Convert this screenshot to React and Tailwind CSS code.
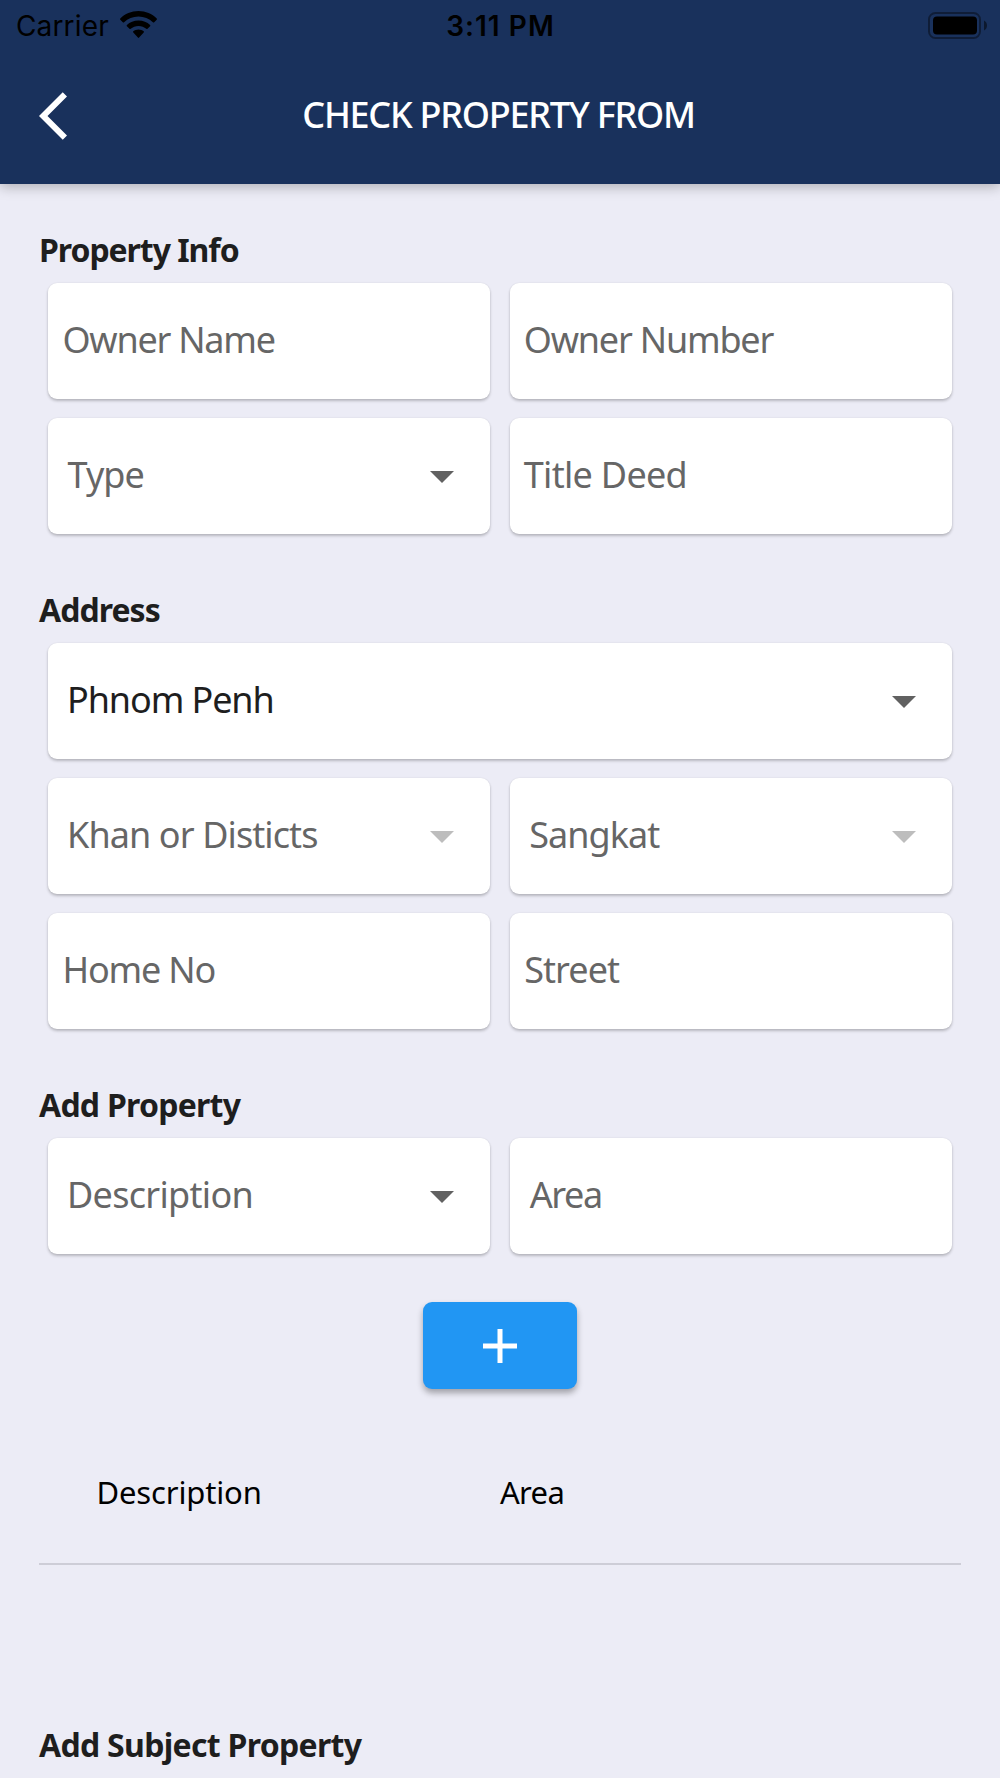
import clsx from "clsx"

const propertyFields = [
  { label: "Owner Name", text: "pl-[14.5px] tracking-[-1.25px]" },
  { label: "Owner Number", text: "pl-[14px] tracking-[-1.2px]" },
  { label: "Type", text: "pl-[19.5px] tracking-[-0.9px]", select: true },
  { label: "Title Deed", text: "pl-[14px] tracking-[-0.7px]" },
]

const addressFields = [
  { label: "Phnom Penh", text: "pl-[19px] tracking-[-1.1px]", select: true, filled: true, wide: true },
  { label: "Khan or Disticts", text: "pl-[19px] tracking-[-0.9px]", select: true, disabled: true },
  { label: "Sangkat", text: "pl-[19.5px] tracking-[-0.95px]", select: true, disabled: true },
  { label: "Home No", text: "pl-[14.5px] tracking-[-1.2px]" },
  { label: "Street", text: "pl-[14.5px] tracking-[-0.95px]" },
]

const addFields = [
  { label: "Description", text: "pl-[19px] tracking-[-0.7px]", select: true },
  { label: "Area", text: "pl-[20px] tracking-[-1.4px]" },
]

const StatusBar = () => {
  return (
    <div className="grid h-[51px] grid-cols-3 items-center text-black font-['Inter',sans-serif]">
      <div className="flex items-center gap-[11px] pl-[16px]">
        <span className="text-[28px] leading-[34px] tracking-[0.15px]">Carrier</span>
        <svg className="-mt-[3px] h-[27px] w-[37px]" viewBox="0 0 37 27">
          <path d="M18.5 0C11.3 0 4.9 2.9.3 7.4c-.4.4-.4.9 0 1.3l2.5 2.6c.4.4.9.4 1.3 0C7.9 7.700 12.900 5.600 18.500 5.600s10.600 2.100 14.400 5.700c.4.4.9.4 1.300 0l2.500-2.600c.4-.4.4-.9 0-1.300C32.100 2.900 25.700 0 18.500 0z" />
          <path d="M18.5 9.400c-4.600 0-8.600 1.700-11.600 4.500-.4.4-.4.9 0 1.300l2.600 2.600c.3.3.8.3 1.200 0 2.100-1.800 4.800-2.900 7.800-2.900s5.700 1.100 7.800 2.900c.4.3.9.3 1.200 0l2.600-2.600c.4-.4.4-.9 0-1.300-3-2.800-7-4.500-11.600-4.500z" />
          <path d="M18.5 18.400c-2 0-3.800.7-5.200 1.800-.4.3-.4.9 0 1.200l4.600 5.200c.3.4.9.4 1.200 0l4.600-5.200c.4-.3.4-.9 0-1.200-1.400-1.100-3.200-1.800-5.200-1.800z" />
        </svg>
      </div>
      <div className="pt-px pl-px text-center text-[28px] leading-[34px] font-semibold tracking-[1.05px]">3:11 PM</div>
      <svg className="mr-[12px] -mt-[1px] h-[27px] w-[60px] justify-self-end" viewBox="0 0 60 27">
        <rect x="1" y="1" width="51" height="25" rx="6.5" fill="none" stroke="#000" strokeOpacity=".4" strokeWidth="2" />
        <rect x="5" y="4.5" width="44" height="18" rx="4" />
        <path d="M56 8.500c2 1 3 2.800 3 5s-1 4-3 5z" fillOpacity=".5" />
      </svg>
    </div>
  )
}

const Header = () => {
  return (
    <header className="relative h-[183.5px] bg-[#19315c] shadow-[0_3px_12px_rgba(0,0,0,0.26)]">
      <StatusBar />
      <div className="grid h-[132px] grid-cols-[120px_1fr_120px] items-start">
        <svg className="mt-[41px] ml-[39px] h-[48px] w-[28px]" viewBox="0 2.1 11.67 19.8">
          <path d="M11.67 3.87L9.9 2.1 0 12l9.9 9.9 1.770-1.770L3.540 12z" fill="#fff" />
        </svg>
        <h1 className="mt-[38.5px] -ml-[3px] text-center text-[36px] leading-[50px] font-medium tracking-[-1.25px] text-white">
          CHECK PROPERTY FROM
        </h1>
      </div>
    </header>
  )
}

const Field = ({ label, text, select, filled, disabled, wide }) => {
  return (
    <div
      className={clsx(
        "flex h-[115.5px] items-center justify-between rounded-[9px] bg-white shadow-[0_2px_3px_rgba(0,0,0,0.22),0_0_2px_rgba(0,0,0,0.08)]",
        wide && "col-span-2"
      )}
    >
      <span
        className={clsx(
          "pb-[2px] text-[36px] leading-[50px] whitespace-nowrap",
          text,
          filled ? "text-[#1e1e1e]" : "text-[#666666]"
        )}
      >
        {label}
      </span>
      {select && (
        <svg
          className={clsx("mt-[2px] mr-[36px] h-3 w-6", disabled ? "text-[#bdbdbd]" : "text-[#616161]")}
          viewBox="0 0 24 12"
          fill="currentColor"
        >
          <path d="M0 0h24L12 12z" />
        </svg>
      )}
    </div>
  )
}

const Section = ({ title, tracking, fields = [] }) => {
  return (
    <section>
      <h2 className={clsx("h-[54.5px] pl-[39px] text-[32px] leading-[41px] font-bold text-[#1e1e1e]", tracking)}>{title}</h2>
      <div className="grid grid-cols-2 gap-x-[19.5px] gap-y-[19.5px] px-12">
        {fields.map((field) => (
          <Field key={field.label} {...field} />
        ))}
      </div>
    </section>
  )
}

const App = () => {
  return (
    <div className="h-[1778px] w-[1000px] overflow-hidden bg-[#ececf6] font-['Noto_Sans',sans-serif]">
      <Header />
      <main className="pt-[45px]">
        <Section title="Property Info" tracking="tracking-[-1.05px]" fields={propertyFields} />
        <div className="h-[55px]" />
        <Section title="Address" tracking="tracking-[-0.95px]" fields={addressFields} />
        <div className="h-[55px]" />
        <Section title="Add Property" tracking="tracking-[-0.75px]" fields={addFields} />

        <button className="mx-auto mt-[48.5px] flex h-[87px] w-[154px] items-center justify-center rounded-[9px] bg-[#2196f3] shadow-[0_4px_6px_rgba(0,0,0,0.32)]">
          <svg className="h-[34px] w-[34px]" viewBox="0 0 34 34" stroke="#fff" strokeWidth="5">
            <path d="M17 0v34M0 17h34" />
          </svg>
        </button>

        <div className="mx-[39px] mt-[82px] flex h-[94px] border-b-2 border-[#cdcdd7] pl-[57.5px] text-[31px] leading-[42px] text-black">
          <div className="w-[403.5px] tracking-[-0.15px]">Description</div>
          <div className="tracking-[-0.7px]">Area</div>
        </div>

        <div className="h-[159px]" />
        <Section title="Add Subject Property" tracking="tracking-[-0.7px]" />
      </main>
    </div>
  )
}

export default App
